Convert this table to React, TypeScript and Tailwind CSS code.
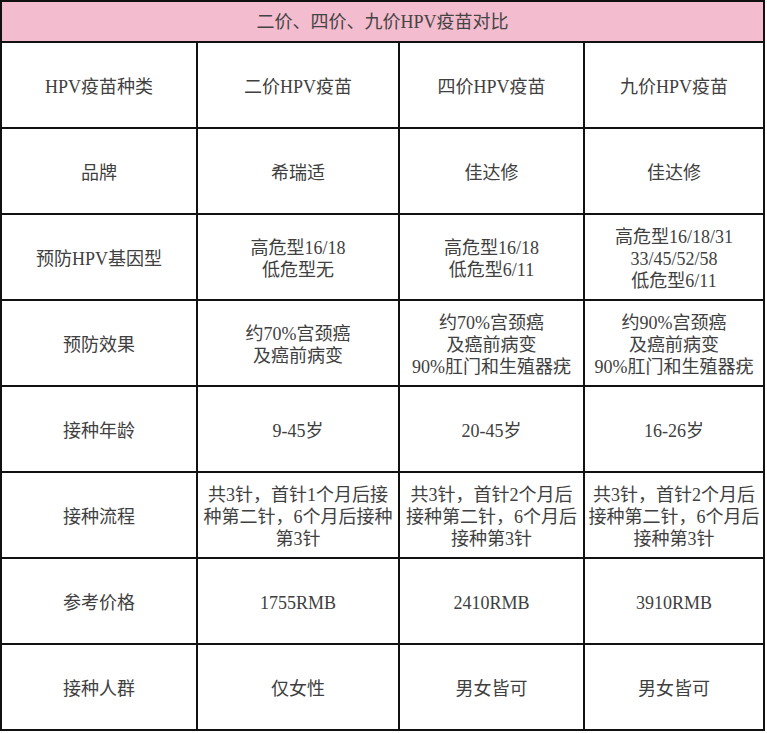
import React from 'react';

type Row = { label: string; cells: string[][] };

const rows: Row[] = [
  { label: 'HPV疫苗种类', cells: [['二价HPV疫苗'], ['四价HPV疫苗'], ['九价HPV疫苗']] },
  { label: '品牌', cells: [['希瑞适'], ['佳达修'], ['佳达修']] },
  {
    label: '预防HPV基因型',
    cells: [
      ['高危型16/18', '低危型无'],
      ['高危型16/18', '低危型6/11'],
      ['高危型16/18/31', '33/45/52/58', '低危型6/11'],
    ],
  },
  {
    label: '预防效果',
    cells: [
      ['约70%宫颈癌', '及癌前病变'],
      ['约70%宫颈癌', '及癌前病变', '90%肛门和生殖器疣'],
      ['约90%宫颈癌', '及癌前病变', '90%肛门和生殖器疣'],
    ],
  },
  { label: '接种年龄', cells: [['9-45岁'], ['20-45岁'], ['16-26岁']] },
  {
    label: '接种流程',
    cells: [
      ['共3针，首针1个月后接', '种第二针，6个月后接种', '第3针'],
      ['共3针，首针2个月后', '接种第二针，6个月后', '接种第3针'],
      ['共3针，首针2个月后', '接种第二针，6个月后', '接种第3针'],
    ],
  },
  { label: '参考价格', cells: [['1755RMB'], ['2410RMB'], ['3910RMB']] },
  { label: '接种人群', cells: [['仅女性'], ['男女皆可'], ['男女皆可']] },
];

const Cell: React.FC<{ lines: string[] }> = ({ lines }) => (
  <div className="h-[86px] pt-[3px] border-r-2 border-b-2 border-[#111] flex flex-col items-center justify-center text-center leading-[22px]">
    {lines.map((line, i) => (
      <span key={i} className="whitespace-nowrap">
        {line}
      </span>
    ))}
  </div>
);

const App: React.FC = () => {
  return (
    <div className="min-h-screen bg-white font-['Liberation_Serif','Noto_Sans_CJK_SC',serif] text-[18px] text-[#404040]">
      <div className="grid w-fit grid-cols-[196px_202px_185px_180px] border-l-2 border-t-2 border-[#111]">
        {/* Title */}
        <div className="col-span-4 h-[41px] pt-[2px] bg-[#f4bccf] border-r-2 border-b-2 border-[#111] flex items-center justify-center text-[#444]">
          二价、四价、九价HPV疫苗对比
        </div>

        {rows.map((row) => (
          <React.Fragment key={row.label}>
            <Cell lines={[row.label]} />
            {row.cells.map((lines, i) => (
              <Cell key={i} lines={lines} />
            ))}
          </React.Fragment>
        ))}
      </div>
    </div>
  );
};

export default App;
